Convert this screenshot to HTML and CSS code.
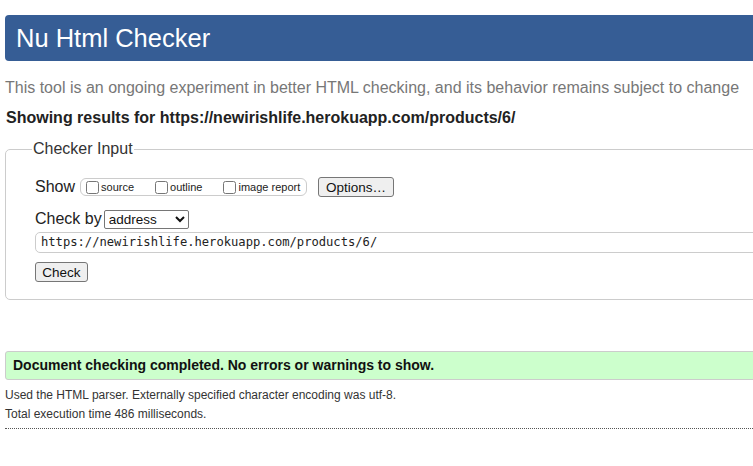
FILE: index.html
```html
<!DOCTYPE html>
<html>
<head>
<meta charset="utf-8">
<title>Nu Html Checker</title>
<link rel="stylesheet" href="styles.css">
</head>
<body>
<div class="page">
  <h1 class="title">Nu Html Checker</h1>
  <p class="intro">This tool is an ongoing experiment in better HTML checking, and its behavior remains subject to change</p>
  <p class="showing">Showing results for https://newirishlife.herokuapp.com/products/6/</p>
  <fieldset class="checker">
    <legend class="legend">Checker Input</legend>
    <div class="row show-row">
      <span class="label">Show</span>
      <span class="opts">
        <label class="opt"><input type="checkbox" class="cb"><span>source</span></label>
        <label class="opt"><input type="checkbox" class="cb"><span>outline</span></label>
        <label class="opt"><input type="checkbox" class="cb"><span>image report</span></label>
      </span>
      <button class="btn opt-btn">Options…</button>
    </div>
    <div class="row check-row">
      <span class="label">Check by</span>
      <select class="sel"><option>address</option></select>
    </div>
    <div class="url">https://newirishlife.herokuapp.com/products/6/</div>
    <div class="row submit-row"><button class="btn check-btn">Check</button></div>
  </fieldset>
  <div class="success">Document checking completed. No errors or warnings to show.</div>
  <p class="meta">Used the HTML parser. Externally specified character encoding was utf-8.</p>
  <p class="meta">Total execution time 486 milliseconds.</p>
  <hr class="rule">
</div>
</body>
</html>
```
FILE: styles.css
```css
html, body { margin: 0; padding: 0; overflow: hidden; background: #fff; }
body { font-family: "Liberation Sans", Arial, sans-serif; color: #222; }
.page { width: 1000px; padding: 15px 0 0 5px; }
.title {
  margin: 0; height: 46px; line-height: 46px; padding-left: 11px;
  background: #365d95; color: #fff; font-weight: normal; font-size: 25.5px;
  border-radius: 4px 0 0 4px;
}
.intro { margin: 18px 0 0 0; font-size: 16px; line-height: 18px; color: #777; }
.showing { margin: 12px 0 0 1px; font-size: 16px; line-height: 18px; font-weight: bold; color: #222; }
.checker {
  margin: 13px 0 0 0; padding: 0 0 17px 29px; border: 1px solid #ccc; border-radius: 5px;
}
.legend { padding: 0 1px; margin-left: -3px; font-size: 16px; line-height: 18px; color: #333; }
.row { display: flex; align-items: center; }
.label { font-size: 16px; color: #222; }
.show-row { margin-top: 19px; height: 20px; }
.opts {
  display: flex; align-items: center; margin-left: 5px; height: 18px; width: 227px;
  border: 1px solid #ccc; border-radius: 6px; box-sizing: border-box; padding-left: 5px;
}
.opt { display: flex; align-items: center; font-size: 11px; color: #222; margin-right: 21px; }
.opt:last-child { margin-right: 0; }
.cb { margin: 0 2px 0 0; width: 13px; height: 13px; }
.btn {
  font-family: "Liberation Sans", Arial, sans-serif; font-size: 13.5px; color: #111;
  background: #efefef; border: 1px solid #767676; border-radius: 3px; padding: 0 6px; height: 20px;
}
.opt-btn { margin-left: 11px; width: 76px; }
.check-row { margin-top: 12px; height: 20px; }
.sel {
  margin-left: 2px; width: 85px; height: 19px; font-family: "Liberation Sans", Arial, sans-serif;
  font-size: 13.5px; border: 1px solid #767676; border-radius: 2px; background: #fff; color: #111;
}
.url {
  margin-top: 3px; height: 21px; box-sizing: border-box; border: 1px solid #ccc; border-radius: 5px;
  padding-left: 5px; font-family: "DejaVu Sans Mono", monospace; font-size: 12.15px; line-height: 19px; color: #222;
}
.submit-row { margin-top: 9px; }
.check-btn { width: 53px; }
.success {
  margin-top: 51px; height: 29px; box-sizing: border-box; border: 1px solid #ccc; border-radius: 3px 0 0 3px;
  background: #ccffcc; padding-left: 7px; font-size: 14px; font-weight: bold; line-height: 27px; color: #111;
}
.meta { margin: 6px 0 0 0; font-size: 12px; line-height: 19px; color: #333; }
.meta + .meta { margin-top: 0; }
.rule { margin: 4px 0 0 0; border: 0; border-top: 1px dotted #555; height: 0; }
```
